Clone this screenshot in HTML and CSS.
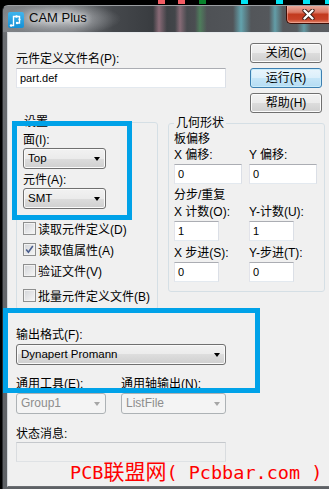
FILE: index.html
```html
<!DOCTYPE html>
<html lang="zh-CN">
<head>
  <meta charset="UTF-8" />
  <meta name="viewport" content="width=device-width, initial-scale=1.0" />
  <title>CAM Plus</title>
  <link rel="stylesheet" href="styles.css">
</head>
<body>
  <!-- desktop strip behind the window -->
  <div class="desktop">
    <span class="dot red"></span>
    <span class="dot red"></span>
    <span class="dot green"></span>
    <span class="dot cyan"></span>
    <span class="dot cyan"></span>
    <span class="dot cyan"></span>
    <span class="dot cyan"></span>
  </div>

  <div class="window">
    <div class="titlebar">
      <span class="app-icon">
        <svg width="16" height="16" viewBox="0 0 16 16">
          <path d="M3 13.5h2.5V4.5h6v6.5h-2" fill="none" stroke="#fff" stroke-width="1.4"/>
          <circle cx="3" cy="13.5" r="1.2" fill="#fff"/>
          <circle cx="8.5" cy="4.5" r="1.2" fill="#fff"/>
          <circle cx="11.5" cy="7.5" r="1.1" fill="#fff"/>
          <circle cx="9" cy="11" r="1.2" fill="#fff"/>
        </svg>
      </span>
      <span class="title">CAM Plus</span>
      <span class="close-btn">
        <svg width="13" height="11" viewBox="0 0 13 11">
          <path d="M2.5 1.5l8 8M10.5 1.5l-8 8" stroke="#3a1a14" stroke-width="4.2" stroke-linecap="round"/>
          <path d="M2.5 1.5l8 8M10.5 1.5l-8 8" stroke="#fff" stroke-width="2.4" stroke-linecap="round"/>
        </svg>
      </span>
    </div>

    <div class="frame">
      <div class="client">
        <div class="top">
          <div class="top-left">
            <div class="lbl">元件定义文件名(P):</div>
            <div class="edit file">part.def</div>
          </div>
          <div class="buttons">
            <div class="btn">关闭(C)</div>
            <div class="btn default">运行(R)</div>
            <div class="btn">帮助(H)</div>
          </div>
        </div>

        <div class="groups">
          <fieldset class="group settings">
            <legend>设置</legend>
            <div class="lbl first">面(I):</div>
            <div class="combo small">Top<i class="arrow"></i></div>
            <div class="lbl next">元件(A):</div>
            <div class="combo small">SMT<i class="arrow"></i></div>
            <div class="checks">
              <div class="check"><span class="box"></span>读取元件定义(D)</div>
              <div class="check">
                <span class="box">
                  <svg width="9" height="9" viewBox="0 0 9 9"><path d="M1.2 4.6l2.2 2.6L7.8 1" fill="none" stroke="#4a5d8c" stroke-width="1.6"/></svg>
                </span>读取值属性(A)
              </div>
              <div class="check"><span class="box"></span>验证文件(V)</div>
              <div class="check batch"><span class="box"></span>批量元件定义文件(B)</div>
            </div>
          </fieldset>

          <fieldset class="group geometry">
            <legend>几何形状</legend>
            <div class="lbl">板偏移</div>
            <div class="pair">
              <div class="cell"><div class="lbl">X 偏移:</div><div class="edit">0</div></div>
              <div class="cell"><div class="lbl">Y 偏移:</div><div class="edit">0</div></div>
            </div>
            <div class="lbl step-title">分步/重复</div>
            <div class="pair count">
              <div class="cell"><div class="lbl">X 计数(O):</div><div class="edit short">1</div></div>
              <div class="cell"><div class="lbl">Y-计数(U):</div><div class="edit short">1</div></div>
            </div>
            <div class="pair stepping">
              <div class="cell"><div class="lbl">X 步进(S):</div><div class="edit short">0</div></div>
              <div class="cell"><div class="lbl">Y-步进(T):</div><div class="edit short">0</div></div>
            </div>
          </fieldset>
        </div>

        <div class="output">
          <div class="lbl">输出格式(F):</div>
          <div class="combo wide">Dynapert Promann<i class="arrow"></i></div>
          <div class="tools">
            <div class="tool">
              <div class="lbl">通用工具(E):</div>
              <div class="combo disabled tool-group">Group1<i class="arrow"></i></div>
            </div>
            <div class="tool">
              <div class="lbl">通用轴输出(N):</div>
              <div class="combo disabled tool-axis">ListFile<i class="arrow"></i></div>
            </div>
          </div>
          <div class="lbl status-lbl">状态消息:</div>
          <div class="edit status"></div>
        </div>
      </div>
    </div>
  </div>

  <!-- annotations drawn over the screenshot -->
  <div class="mark mark-settings"></div>
  <div class="mark mark-output"></div>
  <div class="watermark"><span class="wm-latin">PCB</span>联盟网<span class="wm-latin">( Pcbbar.com )</span></div>
</body>
</html>
```

FILE: styles.css
```css
/* Global */
html, body {
  margin: 0;
  padding: 0;
  background-color: #000;
}
body {
  position: relative;
  width: 329px;
  height: 489px;
  overflow: hidden;
  font-family: "Liberation Sans", "Noto Sans CJK SC", sans-serif;
  font-size: 12px;
  color: #000;
}

/* Desktop strip */
.desktop {
  height: 5px;
  display: flex;
  align-items: flex-start;
}
.dot {
  flex: none;
  width: 7px;
  height: 4px;
}
.dot.red { background-color: #f25c64; }
.dot.green { background-color: #08842c; }
.dot.cyan { background-color: #00e4f4; }
.dot:nth-child(1) { margin-left: 158px; }
.dot:nth-child(2) { margin-left: 13px; }
.dot:nth-child(3) { margin-left: 14px; }
.dot:nth-child(4) { margin-left: 35px; }
.dot:nth-child(5) { margin-left: 28px; }
.dot:nth-child(6) { margin-left: 20px; }
.dot:nth-child(7) { margin-left: 15px; }

/* Window frame */
.window {
  margin-left: 2px;
  height: 484px;
  border-left: 1px solid #2b2d30;
  border-top: 1px solid #9a9da1;
  border-radius: 6px 0 0 0;
  box-sizing: border-box;
  background: linear-gradient(180deg, #85888c 0, #6a6d71 30px, #5e6165 100%);
  display: flex;
  flex-direction: column;
  overflow: hidden;
}
.titlebar {
  height: 26px;
  flex: none;
  display: flex;
  align-items: flex-start;
  padding-left: 5px;
  background:
    linear-gradient(90deg, transparent 150px, rgba(232, 160, 182, .45) 156px, transparent 164px,
      transparent 172px, rgba(232, 160, 182, .4) 177px, transparent 184px,
      transparent 192px, rgba(80, 170, 100, .5) 197px, transparent 204px,
      transparent 230px, rgba(110, 215, 230, .6) 238px, transparent 248px,
      transparent 266px, rgba(110, 215, 230, .55) 272px, transparent 280px,
      transparent 294px, rgba(110, 215, 230, .5) 301px, transparent 308px),
    radial-gradient(ellipse 60px 16px at 58px 13px, rgba(215, 218, 222, .7), transparent),
    linear-gradient(90deg, #808387 0, #74777b 70px, #45484c 110px, #393c40 150px, #4e5155 200px, #5b5e62 326px);
}
.app-icon {
  width: 16px;
  height: 16px;
  margin-top: 6px;
  border-radius: 2px;
  background: linear-gradient(180deg, #3fb4ec, #1590d6);
  display: flex;
}
.title {
  margin-left: 5px;
  margin-top: 4px;
  font-size: 13px;
  line-height: 16px;
  color: #0a0a0a;
  text-shadow: 0 0 6px #fff, 0 0 10px rgba(255, 255, 255, .8);
}
.close-btn {
  margin-left: auto;
  margin-top: -1px;
  width: 43px;
  height: 19px;
  box-sizing: border-box;
  border: 1px solid #3d0f08;
  border-top: none;
  border-right: none;
  border-radius: 0 0 0 5px;
  background: linear-gradient(180deg, #eab0a2 0, #dc7a66 40%, #c23a1f 52%, #c84228 80%, #e2876a 100%);
  box-shadow: inset 0 0 0 1px rgba(255, 200, 190, .45);
  display: flex;
  align-items: center;
  justify-content: center;
}
.frame {
  flex: 1;
  display: flex;
  padding: 0 0 2px 4px;
}
.client {
  flex: 1;
  background-color: #f0f0f0;
  border-top: 1px solid #e6e9ec;
  border-left: 1px solid #d2d6da;
  border-bottom: 1px solid #6b6e72;
  padding: 10px 0 0 8px;
}

/* Labels and edits */
.lbl {
  line-height: 16px;
  white-space: nowrap;
}
.edit {
  height: 20px;
  box-sizing: border-box;
  padding: 0 3px;
  background-color: #fff;
  border: 1px solid;
  border-color: #abadb3 #dbdfe6 #e3e9ef #e2e3ea;
  font-size: 11px;
  line-height: 18px;
  margin-top: 1px;
}
.edit.file { width: 210px; }

/* Top row */
.top {
  display: flex;
  gap: 24px;
}
.top-left {
  width: 210px;
  padding-top: 8px;
}
.buttons {
  width: 72px;
  display: flex;
  flex-direction: column;
  gap: 5px;
}
.btn {
  height: 20px;
  box-sizing: border-box;
  border: 1px solid #707070;
  border-radius: 3px;
  background: linear-gradient(180deg, #f2f2f2 0, #ebebeb 50%, #dddddd 50%, #cfcfcf 100%);
  box-shadow: inset 0 0 0 1px #fcfcfc;
  text-align: center;
  line-height: 18px;
}
.btn.default {
  border-color: #3c7fb1;
  background: linear-gradient(180deg, #e9f5fc 0, #dbeffb 50%, #c6e6f8 50%, #b5dcf3 100%);
  box-shadow: inset 0 0 0 1px #c8ecfb;
}

/* Group boxes */
.groups {
  display: flex;
  align-items: flex-start;
  gap: 10px;
  margin-top: 1px;
}
.group {
  margin: 0;
  min-width: 0;
  box-sizing: border-box;
  border: 1px solid #d5dfe5;
  border-radius: 3px;
}
.group legend {
  line-height: 16px;
  font-size: 12px;
}
.settings {
  width: 142px;
  padding: 0 6px 3px 6px;
}
.settings legend { padding: 0 1px; }
.geometry {
  width: 157px;
  margin-top: 1px;
  padding: 0 5px 9px 5px;
}
.geometry legend { padding: 0 2px; }

.settings .lbl { line-height: 15px; }
.settings .lbl.first { margin-top: 3px; }
.settings .lbl.next { margin-top: 4px; }

/* Drop-down lists */
.combo {
  position: relative;
  height: 21px;
  box-sizing: border-box;
  border: 1px solid #707070;
  border-radius: 3px;
  background: linear-gradient(180deg, #f2f2f2 0, #ebebeb 50%, #dddddd 50%, #cfcfcf 100%);
  box-shadow: inset 0 0 0 1px #fafafa;
  padding-left: 4px;
  font-size: 11.5px;
  line-height: 19px;
}
.combo.small { width: 83px; }
.combo.wide { width: 210px; margin-top: 1px; }
.arrow {
  position: absolute;
  right: 5px;
  top: 8px;
  width: 0;
  height: 0;
  border-left: 3.5px solid transparent;
  border-right: 3.5px solid transparent;
  border-top: 4px solid #000;
}
.combo.disabled {
  margin-top: 1px;
  border-color: #adb2b5;
  background: #f4f4f4;
  box-shadow: none;
  color: #8d8d8d;
  font-size: 12px;
}
.combo.disabled .arrow { border-top-color: #a6a6a6; }
.tool-group { width: 90px; }
.tool-axis { width: 105px; }

/* Checkboxes */
.checks { margin-top: 9px; }
.check {
  height: 21px;
  display: flex;
  align-items: center;
  gap: 2px;
  white-space: nowrap;
}
.check.batch { margin-top: 4px; }
.box {
  flex: none;
  width: 13px;
  height: 13px;
  box-sizing: border-box;
  border: 1px solid #8e8f8f;
  background: linear-gradient(135deg, #d2d4d8, #f7f7f7);
  box-shadow: inset 0 0 0 1px #f2f2f2;
  display: flex;
  align-items: center;
  justify-content: center;
}

/* Geometry pairs */
.pair {
  display: grid;
  grid-template-columns: 68px 68px;
  column-gap: 7px;
}
.edit.short { width: 45px; }
.step-title { margin-top: 3px; }
.pair.count { margin-top: 1px; }
.pair.stepping { margin-top: 4px; }

/* Output section */
.output { margin-top: 17px; }
.tools {
  display: flex;
  gap: 15px;
  margin-top: 11px;
}
.status-lbl { margin-top: 12px; }
.edit.status {
  width: 210px;
  margin-top: 0;
  background-color: #f0f0f0;
  border-color: #c5c8cc #d9dcdf #dfe2e5 #d9dcdf;
}

/* Annotations */
.mark {
  position: absolute;
  box-sizing: border-box;
  border: 5px solid #00a2e8;
}
.mark-settings {
  left: 12px;
  top: 121px;
  width: 120px;
  height: 99px;
}
.mark-output {
  left: 3px;
  top: 308px;
  width: 257px;
  height: 85px;
}
.watermark {
  position: absolute;
  left: 70px;
  top: 460px;
  font-family: "DejaVu Sans Mono", "Noto Sans CJK SC", monospace;
  font-size: 21px;
  line-height: 24px;
  color: #f00;
  white-space: pre;
}
.wm-latin {
  font-size: 18.5px;
}
```
